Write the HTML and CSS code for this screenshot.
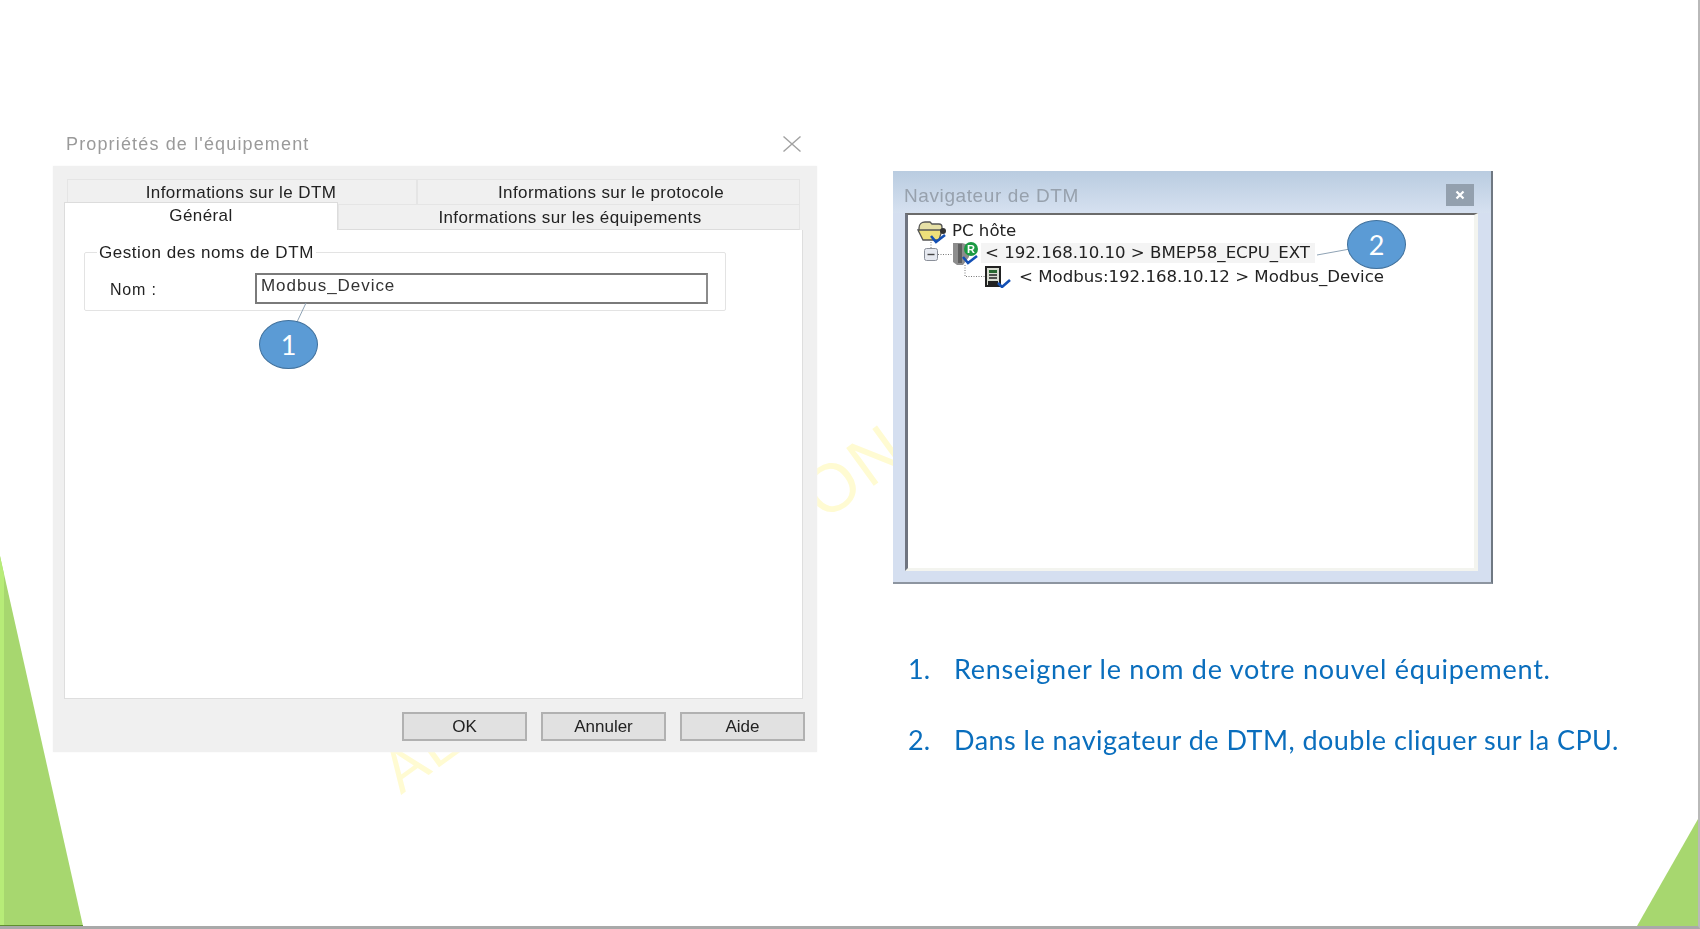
FILE: index.html
```html
<!DOCTYPE html>
<html lang="fr">
<head>
<meta charset="utf-8">
<title>Propriétés de l'équipement</title>
<link rel="stylesheet" href="styles.css">
</head>
<body>
<main class="slide">
  <div class="tri tri-left"></div>
  <div class="tri-strip"></div>
  <div class="tri tri-right"></div>
  <div class="edge-green"></div>
  <span class="mark mark-a">AE</span>
  <span class="mark mark-b">ON</span>

  <section class="dialog-wrap">
    <header class="dialog-title">
      <span>Propriétés de l'équipement</span>
      <svg class="dialog-x" width="18" height="16" viewBox="0 0 18 16"><path d="M0.5 0.5L17.5 15.5M17.5 0.5L0.5 15.5" stroke="#a2a2a2" stroke-width="1.4" fill="none"/></svg>
    </header>
    <div class="panel">
      <div class="tabs-back">
        <div class="tab tab-dtm">Informations sur le DTM</div>
        <div class="tab tab-proto">Informations sur le protocole</div>
      </div>
      <div class="tabs-front">
        <div class="tab tab-active">Général</div>
        <div class="tab tab-equip">Informations sur les équipements</div>
      </div>
      <div class="page">
        <fieldset class="group">
          <legend>Gestion des noms de DTM</legend>
          <div class="field">
            <span class="field-label">Nom :</span>
            <div class="field-input">Modbus_Device</div>
          </div>
        </fieldset>
      </div>
      <footer class="actions">
        <div class="btn">OK</div>
        <div class="btn">Annuler</div>
        <div class="btn">Aide</div>
      </footer>
    </div>
  </section>

  <section class="nav">
    <header class="nav-title">
      <span>Navigateur de DTM</span>
      <svg class="nav-x" width="28" height="22" viewBox="0 0 28 22"><rect width="28" height="22" fill="#93a0ae"/><path d="M10.5 7.5L17.5 14.5M17.5 7.5L10.5 14.5" stroke="#fff" stroke-width="2.2" fill="none"/></svg>
    </header>
    <div class="tree">
      <div class="row row-root">
        <svg class="ico-folder" width="30" height="24" viewBox="0 0 30 24">
          <path d="M2 8C2 4 5 2 8 2h5l2 2h7c2 0 3 1 3 3v4H2z" fill="#e6e0a6" stroke="#555" stroke-width="1.3"/>
          <path d="M1 10h24l-3 10H6z" fill="#eee07a" stroke="#555" stroke-width="1.3"/>
          <circle cx="26" cy="11" r="3" fill="#333"/>
          <path d="M14 16l5 6 9-7" stroke="#1450b4" stroke-width="2.6" fill="none"/>
        </svg>
        <span class="row-text">PC hôte</span>
      </div>
      <div class="row row-cpu">
        <svg class="ico-exp" width="14" height="13" viewBox="0 0 14 13"><rect x=".5" y=".5" width="13" height="12" rx="2" fill="#e6e9f0" stroke="#8a8f99"/><path d="M3.500 6.500h7" stroke="#444" stroke-width="1.400"/></svg>
        <svg class="ico-cpu" width="28" height="24" viewBox="0 0 28 24">
          <path d="M1 1h9l7 2v12l-6 8H5l-4-3z" fill="#8d8d8d"/>
          <path d="M6 2h4v19H6z" fill="#5f5f5f"/>
          <circle cx="19" cy="7" r="7" fill="#1b9a43"/>
          <text class="ico-r" x="19" y="11">R</text>
          <path d="M11 15l5 6 9-7" stroke="#1450b4" stroke-width="2.6" fill="none"/>
        </svg>
        <span class="row-text row-selected">&lt; 192.168.10.10 &gt; BMEP58_ECPU_EXT</span>
      </div>
      <div class="row row-dev">
        <svg class="ico-dev" width="26" height="22" viewBox="0 0 26 22">
          <rect x="1" y="1" width="14" height="19" fill="#d9ddd2" stroke="#222" stroke-width="2"/>
          <path d="M4 4h8v3H4z" fill="#27672f"/>
          <path d="M4 9h8M4 12h8" stroke="#222" stroke-width="1.600"/>
          <path d="M3 15h10v4H3z" fill="#222"/>
          <path d="M13 17l4 4 8-7" stroke="#1450b4" stroke-width="2.6" fill="none"/>
        </svg>
        <span class="row-text">&lt; Modbus:192.168.10.12 &gt; Modbus_Device</span>
      </div>
    </div>
  </section>

  <svg class="lines" width="1700" height="929" viewBox="0 0 1700 929">
    <path d="M306 303L297 322" stroke="#8fa3b5" stroke-width="1" fill="none"/>
    <path d="M1317 255L1350 249" stroke="#8fa3b5" stroke-width="1" fill="none"/>
    <path d="M931 242V249M938 254.500H953M965 265V276.500H986" stroke="#777" stroke-width="1" stroke-dasharray="1 1.500" fill="none"/>
  </svg>
  <div class="badge badge-1">1</div>
  <div class="badge badge-2">2</div>

  <ol class="steps">
    <li class="step step-one"><span class="num">1.</span><span>Renseigner le nom de votre nouvel équipement.</span></li>
    <li class="step step-two"><span class="num">2.</span><span>Dans le navigateur de DTM, double cliquer sur la CPU.</span></li>
  </ol>
</main>
</body>
</html>
```
FILE: styles.css
```css
* { box-sizing: border-box; }
html, body { margin: 0; padding: 0; background: #fff; }
.slide {
  position: relative;
  width: 1700px;
  height: 929px;
  overflow: hidden;
  background: #fff;
  border-right: 2px solid #b9b9b9;
  border-bottom: 3px solid #a9a9a9;
  font-family: "Liberation Sans", Arial, sans-serif;
  color: #222;
}
.tri { position: absolute; background: #a7d76f; }
.tri-left { left: 0; top: 556px; width: 83px; height: 370px; clip-path: polygon(0 0, 100% 100%, 0 100%); }
.tri-strip { position: absolute; left: 0; top: 556px; width: 4px; height: 370px; background: #b7ec78; clip-path: polygon(0 0, 100% 5%, 100% 100%, 0 100%); }
.tri-right { right: 0; top: 819px; width: 61px; height: 107px; clip-path: polygon(100% 0, 100% 100%, 0 100%); }
.edge-green { position: absolute; left: 0; bottom: 0; width: 83px; height: 1px; background: #5f8f30; }

.mark {
  position: absolute;
  color: #fffbd2;
  font-size: 68px;
  line-height: 1;
  white-space: nowrap;
  transform: rotate(-36deg);
  transform-origin: left bottom;
}
.mark-a { left: 407px; top: 743px; font-size: 60px; letter-spacing: 2px; }
.mark-b { left: 830px; top: 462px; letter-spacing: 3px; }

.dialog-wrap { position: absolute; left: 53px; top: 130px; width: 764px; filter: blur(.45px); }
.dialog-title {
  display: flex;
  justify-content: space-between;
  align-items: center;
  height: 28px;
  padding: 0 16px 0 13px;
  margin-bottom: 8px;
  color: #9a9a9a;
  font-size: 18px;
  letter-spacing: 1.15px;
}
.panel { background: #f0f0f0; padding: 13px 14px 11px 11px; box-shadow: 0 0 2px #f4f4f4; }
.tabs-back, .tabs-front { display: flex; font-size: 17px; letter-spacing: .4px; }
.tabs-back { margin-left: 3px; height: 25px; width: 733px; }
.tabs-front { height: 26px; width: 736px; }
.tab { display: flex; align-items: center; justify-content: center; border: 1px solid #e5e5e5; border-bottom: 0; padding-top: 2px; }
.tab-dtm { width: 350px; padding-right: 2px; }
.tab-proto { width: 383px; padding-left: 5px; }
.tab-active { width: 274px; height: 28px; margin-top: -2px; background: #fff; padding: 0 0 2px; position: relative; border-color: #dcdcdc; border-bottom: 0; }
.tab-equip { width: 462px; border-bottom: 1px solid #dcdcdc; padding-left: 2px; }
.page { height: 469px; background: #fff; border: 1px solid #dedede; border-top: 0; padding: 11px 76px 0 19px; }
.group { margin: 0; height: 70px; padding: 0; border: 1px solid #e3e3e3; border-radius: 2px; }
.group legend { margin-left: 12px; padding: 2px 2px 0; font-size: 17px; line-height: 20px; letter-spacing: .55px; }
.field { display: flex; align-items: center; height: 50px; }
.field-label { width: 170px; padding: 3px 0 0 25px; font-size: 16px; letter-spacing: .8px; }
.field-input {
  width: 453px;
  height: 31px;
  padding: 0 0 5px 4px;
  display: flex;
  align-items: center;
  background: #fff;
  border: 2px solid #7a7a7a;
  border-right-color: #8c8c8c;
  font-size: 17px;
  letter-spacing: .95px;
  color: #333;
}
.actions { display: flex; justify-content: flex-end; gap: 14px; margin-top: 13px; margin-right: -2px; }
.btn {
  width: 125px;
  height: 29px;
  display: flex;
  align-items: center;
  justify-content: center;
  background: #e1e1e1;
  border: 2px solid #b1b1b1;
  font-size: 17px;
}

.nav {
  position: absolute;
  left: 893px;
  top: 171px;
  width: 600px;
  height: 413px;
  padding: 0 13px 11px 12px;
  display: flex;
  flex-direction: column;
  background: #d5dff0;
  border-right: 2px solid #6f7882;
  border-bottom: 2px solid #8d95a0;
  filter: blur(.45px);
}
.nav-title {
  height: 42px;
  margin: 0 -13px 0 -12px;
  padding: 8px 17px 0 11px;
  display: flex;
  align-items: center;
  justify-content: space-between;
  background: linear-gradient(#b9cce0, #d6e1f0);
  color: #97a1ad;
  font-size: 19px;
  letter-spacing: .6px;
}
.nav-x { margin-top: -3px; }
.tree {
  flex: 1;
  background: #fff;
  border-top: 2px solid #6b6b6b;
  border-left: 3px solid #6f7480;
  border-right: 4px solid #f3f4ef;
  border-bottom: 3px solid #f3f4ef;
  font-family: "DejaVu Sans", Verdana, sans-serif;
  font-size: 16.6px;
  color: #222;
  padding: 4px 0 0 9px;
  display: flex;
  flex-direction: column;
}
.row { display: flex; align-items: center; }
.row-root { height: 23px; }
.row-cpu { height: 22px; padding-left: 7px; }
.row-dev { height: 24px; padding-left: 68px; }
.ico-folder { margin-right: 5px; margin-top: 3px; flex: none; }
.ico-exp { margin-right: 14px; flex: none; margin-top: 2px; }
.ico-cpu { margin-right: 1px; flex: none; margin-top: 2px; }
.ico-dev { margin-right: 8px; flex: none; margin-top: 1px; }
.ico-r { font-size: 11px; font-weight: 700; fill: #fff; text-anchor: middle; font-family: "Liberation Sans", Arial, sans-serif; }
.row-text { white-space: nowrap; }
.row-selected { background: #f4f4f4; height: 20px; line-height: 20px; padding: 0 5px 0 4px; }

.lines { position: absolute; left: 0; top: 0; pointer-events: none; }
.badge {
  position: absolute;
  width: 59px;
  height: 49px;
  display: flex;
  align-items: center;
  justify-content: center;
  border-radius: 50%;
  background: #5b9bd5;
  border: 1px solid #41719c;
  color: #fff;
  font-family: "Lato", "Open Sans", sans-serif;
  font-size: 27px;
}
.badge-1 { left: 259px; top: 320px; }
.badge-2 { left: 1347px; top: 220px; }

.steps {
  position: absolute;
  left: 908px;
  top: 647px;
  margin: 0;
  padding: 0;
  list-style: none;
  display: flex;
  flex-direction: column;
  gap: 27px;
  font-family: "Lato", "Open Sans", sans-serif;
  font-size: 27px;
  line-height: 44px;
  color: #0a6ebd;
  white-space: nowrap;
  filter: blur(.3px);
}
.step { display: flex; }
.step-one { letter-spacing: .75px; }
.step-two { letter-spacing: .47px; }
.num { width: 46px; letter-spacing: 0; }
```
